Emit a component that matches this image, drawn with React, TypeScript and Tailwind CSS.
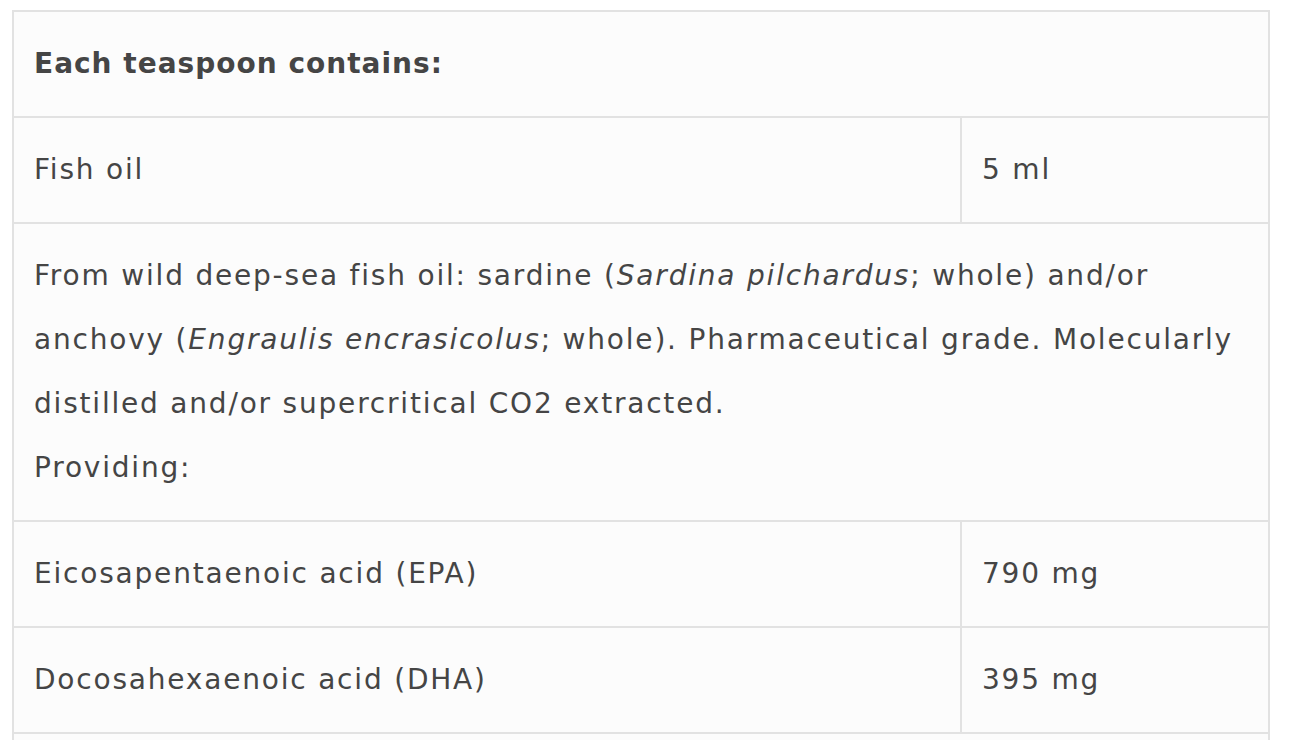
const cell = 'px-5 py-5 leading-[64px]';

function Row({ label, value }: { label: string; value: string }) {
  return (
    <div className="flex border-b-2 border-[#e2e2e2]">
      <div className={`${cell} w-[948px] shrink-0 border-r-2 border-[#e2e2e2]`}>{label}</div>
      <div className={`${cell} flex-1`}>{value}</div>
    </div>
  );
}

export default function App() {
  return (
    <div
      className="min-h-screen bg-white pl-[12px] pt-[10px] text-[28px] tracking-[1.8px] text-[#454545]"
      style={{ fontFamily: '"DejaVu Sans", sans-serif' }}
    >
      <div className="w-[1258px] border-2 border-[#e2e2e2] bg-[#fcfcfc]">
        <div className={`${cell} border-b-2 border-[#e2e2e2] font-bold tracking-[1px]`}>Each teaspoon contains:</div>
        <Row label="Fish oil" value="5 ml" />
        <div className={`${cell} border-b-2 border-[#e2e2e2]`}>
          From wild deep-sea fish oil: sardine (<em>Sardina pilchardus</em>; whole) and/or
          <br />
          anchovy (<em>Engraulis encrasicolus</em>; whole). Pharmaceutical grade. Molecularly
          <br />
          distilled and/or supercritical CO2 extracted.
          <br />
          Providing:
        </div>
        <Row label="Eicosapentaenoic acid (EPA)" value="790 mg" />
        <Row label="Docosahexaenoic acid (DHA)" value="395 mg" />
        <div className="h-[104px]" />
      </div>
    </div>
  );
}
